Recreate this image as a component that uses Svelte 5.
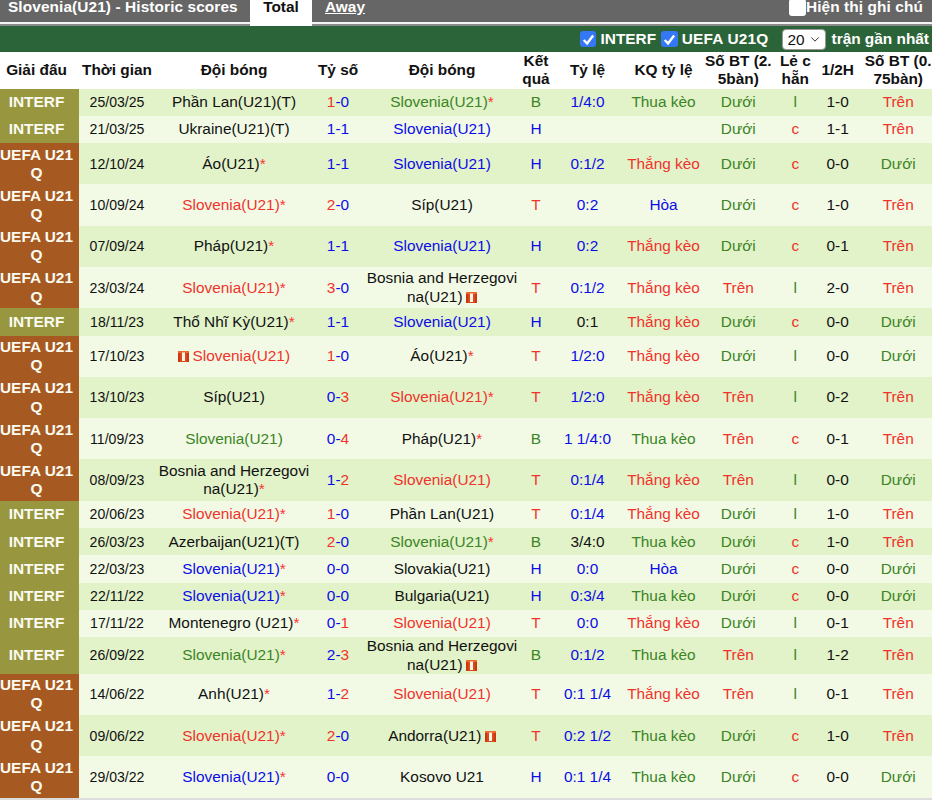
<script>
	const iw = 'Trên', du = 'Dưới';
	// league, date, home, score, away, result, odds, oddsResult, ou25, oddEven, half, ou075
	const matches = [
		{ lg: 'INTERF', date: '25/03/25', h: 'Phần Lan(U21)(T)', a: 'Slovenia(U21)', aStar: 1, ac: 'g', s: [1, 0], sc: ['r', 'b'], res: 'B', odds: '1/4:0', oc: 'b', kq: 'Thua kèo', ou: du, oe: 'l', half: '1-0', ou2: iw },
		{ lg: 'INTERF', date: '21/03/25', h: 'Ukraine(U21)(T)', a: 'Slovenia(U21)', ac: 'b', s: [1, 1], sc: ['b', 'b'], res: 'H', odds: '', oc: 'b', kq: '', ou: du, oe: 'c', half: '1-1', ou2: iw },
		{ lg: 'UEFA U21Q', date: '12/10/24', h: 'Áo(U21)', hStar: 1, a: 'Slovenia(U21)', ac: 'b', s: [1, 1], sc: ['b', 'b'], res: 'H', odds: '0:1/2', oc: 'b', kq: 'Thắng kèo', ou: du, oe: 'c', half: '0-0', ou2: du },
		{ lg: 'UEFA U21Q', date: '10/09/24', h: 'Slovenia(U21)', hc: 'r', hStar: 1, a: 'Síp(U21)', s: [2, 0], sc: ['r', 'b'], res: 'T', odds: '0:2', oc: 'b', kq: 'Hòa', ou: du, oe: 'c', half: '1-0', ou2: iw },
		{ lg: 'UEFA U21Q', date: '07/09/24', h: 'Pháp(U21)', hStar: 1, a: 'Slovenia(U21)', ac: 'b', s: [1, 1], sc: ['b', 'b'], res: 'H', odds: '0:2', oc: 'b', kq: 'Thắng kèo', ou: du, oe: 'c', half: '0-1', ou2: iw },
		{ lg: 'UEFA U21Q', date: '23/03/24', h: 'Slovenia(U21)', hc: 'r', hStar: 1, a: 'Bosnia and Herzegovina(U21)', aCard: 1, s: [3, 0], sc: ['r', 'b'], res: 'T', odds: '0:1/2', oc: 'b', kq: 'Thắng kèo', ou: iw, oe: 'l', half: '2-0', ou2: iw },
		{ lg: 'INTERF', date: '18/11/23', h: 'Thổ Nhĩ Kỳ(U21)', hStar: 1, a: 'Slovenia(U21)', ac: 'b', s: [1, 1], sc: ['b', 'b'], res: 'H', odds: '0:1', oc: '', kq: 'Thắng kèo', ou: du, oe: 'c', half: '0-0', ou2: du },
		{ lg: 'UEFA U21Q', date: '17/10/23', h: 'Slovenia(U21)', hc: 'r', hCard: 1, a: 'Áo(U21)', aStar: 1, s: [1, 0], sc: ['r', 'b'], res: 'T', odds: '1/2:0', oc: 'b', kq: 'Thắng kèo', ou: du, oe: 'l', half: '0-0', ou2: du },
		{ lg: 'UEFA U21Q', date: '13/10/23', h: 'Síp(U21)', a: 'Slovenia(U21)', ac: 'r', aStar: 1, s: [0, 3], sc: ['b', 'r'], res: 'T', odds: '1/2:0', oc: 'b', kq: 'Thắng kèo', ou: iw, oe: 'l', half: '0-2', ou2: iw },
		{ lg: 'UEFA U21Q', date: '11/09/23', h: 'Slovenia(U21)', hc: 'g', a: 'Pháp(U21)', aStar: 1, s: [0, 4], sc: ['b', 'r'], res: 'B', odds: '1 1/4:0', oc: 'b', kq: 'Thua kèo', ou: iw, oe: 'c', half: '0-1', ou2: iw },
		{ lg: 'UEFA U21Q', date: '08/09/23', h: 'Bosnia and Herzegovina(U21)', hStar: 1, a: 'Slovenia(U21)', ac: 'r', s: [1, 2], sc: ['b', 'r'], res: 'T', odds: '0:1/4', oc: 'b', kq: 'Thắng kèo', ou: iw, oe: 'l', half: '0-0', ou2: du },
		{ lg: 'INTERF', date: '20/06/23', h: 'Slovenia(U21)', hc: 'r', hStar: 1, a: 'Phần Lan(U21)', s: [1, 0], sc: ['r', 'b'], res: 'T', odds: '0:1/4', oc: 'b', kq: 'Thắng kèo', ou: du, oe: 'l', half: '1-0', ou2: iw },
		{ lg: 'INTERF', date: '26/03/23', h: 'Azerbaijan(U21)(T)', a: 'Slovenia(U21)', ac: 'g', aStar: 1, s: [2, 0], sc: ['r', 'b'], res: 'B', odds: '3/4:0', oc: '', kq: 'Thua kèo', ou: du, oe: 'c', half: '1-0', ou2: iw },
		{ lg: 'INTERF', date: '22/03/23', h: 'Slovenia(U21)', hc: 'b', hStar: 1, a: 'Slovakia(U21)', s: [0, 0], sc: ['b', 'b'], res: 'H', odds: '0:0', oc: 'b', kq: 'Hòa', ou: du, oe: 'c', half: '0-0', ou2: du },
		{ lg: 'INTERF', date: '22/11/22', h: 'Slovenia(U21)', hc: 'b', hStar: 1, a: 'Bulgaria(U21)', s: [0, 0], sc: ['b', 'b'], res: 'H', odds: '0:3/4', oc: 'b', kq: 'Thua kèo', ou: du, oe: 'c', half: '0-0', ou2: du },
		{ lg: 'INTERF', date: '17/11/22', h: 'Montenegro (U21)', hStar: 1, a: 'Slovenia(U21)', ac: 'r', s: [0, 1], sc: ['b', 'r'], res: 'T', odds: '0:0', oc: 'b', kq: 'Thắng kèo', ou: du, oe: 'l', half: '0-1', ou2: iw },
		{ lg: 'INTERF', date: '26/09/22', h: 'Slovenia(U21)', hc: 'g', hStar: 1, a: 'Bosnia and Herzegovina(U21)', aCard: 1, s: [2, 3], sc: ['b', 'r'], res: 'B', odds: '0:1/2', oc: 'b', kq: 'Thua kèo', ou: iw, oe: 'l', half: '1-2', ou2: iw },
		{ lg: 'UEFA U21Q', date: '14/06/22', h: 'Anh(U21)', hStar: 1, a: 'Slovenia(U21)', ac: 'r', s: [1, 2], sc: ['b', 'r'], res: 'T', odds: '0:1 1/4', oc: 'b', kq: 'Thắng kèo', ou: iw, oe: 'l', half: '0-1', ou2: iw },
		{ lg: 'UEFA U21Q', date: '09/06/22', h: 'Slovenia(U21)', hc: 'r', hStar: 1, a: 'Andorra(U21)', aCard: 1, s: [2, 0], sc: ['r', 'b'], res: 'T', odds: '0:2 1/2', oc: 'b', kq: 'Thua kèo', ou: du, oe: 'c', half: '1-0', ou2: iw },
		{ lg: 'UEFA U21Q', date: '29/03/22', h: 'Slovenia(U21)', hc: 'b', hStar: 1, a: 'Kosovo U21', s: [0, 0], sc: ['b', 'b'], res: 'H', odds: '0:1 1/4', oc: 'b', kq: 'Thua kèo', ou: du, oe: 'c', half: '0-0', ou2: du }
	];

	const resColor = { T: 'r', B: 'g', H: 'b' };
	const kqColor = { 'Thắng kèo': 'r', 'Thua kèo': 'g', 'Hòa': 'b' };
	const ouColor = (v) => (v === iw ? 'r' : 'g');
	const headers = ['Giải đấu', 'Thời gian', 'Đội bóng', 'Tỷ số', 'Đội bóng', 'Kết quả', 'Tỷ lệ', 'KQ tỷ lệ', 'Số BT (2.5bàn)', 'Lẻ c hẵn', '1/2H', 'Số BT (0.75bàn)'];
</script>

{#snippet card(side)}
	<svg class="card {side}" viewBox="0 0 11 11" aria-hidden="true">
		<rect width="11" height="11" fill="#dc4a1c" />
		<rect x="0" width="2" height="11" fill="#c9380f" />
		<rect x="9" width="2" height="11" fill="#c9380f" />
		<rect y="0" width="11" height="2" fill="#ea6a30" />
		<rect x="4" y="1.5" width="3" height="8.5" fill="#fff4ea" />
	</svg>
{/snippet}

{#snippet check()}
	<span class="check on">
		<svg viewBox="0 0 16 16" aria-hidden="true"><path d="M3.6 8.6 L6.8 12 L12.6 4.4" fill="none" stroke="#fff" stroke-width="2.3" /></svg>
	</span>
{/snippet}

<div class="page">
	<div class="tabs">
		<span class="title">Slovenia(U21) - Historic scores</span>
		<span class="tab active">Total</span>
		<a class="tab link" href="#away">Away</a>
		<label class="note"><span class="check"></span>Hiện thị ghi chú</label>
	</div>
	<div class="filters">
		{@render check()}<span class="flt">INTERF</span>
		{@render check()}<span class="flt second">UEFA U21Q</span>
		<div class="select">
			<select><option>20</option><option>10</option></select>
			<svg viewBox="0 0 12 8" aria-hidden="true"><path d="M1.5 1.5 L6 6 L10.5 1.5" fill="none" stroke="#333" stroke-width="1.2" /></svg>
		</div>
		<span class="flt last">trận gần nhất</span>
	</div>
	<div class="wrap">
		<table>
			<colgroup>
				<col style="width:85px" /><col style="width:76px" /><col style="width:158px" /><col style="width:50px" />
				<col style="width:158px" /><col style="width:30px" /><col style="width:73px" /><col style="width:79px" />
				<col style="width:70.6px" /><col style="width:43.4px" /><col style="width:41.4px" /><col style="width:79.6px" />
			</colgroup>
			<thead>
				<tr>
					{#each headers as h}<th>{h}</th>{/each}
				</tr>
			</thead>
			<tbody>
				{#each matches as m, i}
					<tr class:alt={i % 2 === 1}>
						<td class="lg" class:uefa={m.lg !== 'INTERF'}>{m.lg === 'INTERF' ? m.lg : 'UEFA U21 Q'}</td>
						<td class="date">{m.date}</td>
						<td class="team {m.hc ?? ''}">{#if m.hCard}{@render card('before')}{/if}{m.h}{#if m.hStar}<span class="star">*</span>{/if}</td>
						<td class="num"><span class={m.sc[0]}>{m.s[0]}</span><span class="b">-</span><span class={m.sc[1]}>{m.s[1]}</span></td>
						<td class="team {m.ac ?? ''}">{m.a}{#if m.aStar}<span class="star">*</span>{/if}{#if m.aCard}{@render card('after')}{/if}</td>
						<td class="num {resColor[m.res]}">{m.res}</td>
						<td class="num {m.oc}">{m.odds}</td>
						<td class="num {kqColor[m.kq] ?? ''}">{m.kq}</td>
						<td class="num {ouColor(m.ou)}">{m.ou}</td>
						<td class="num {m.oe === 'c' ? 'r' : 'g'}">{m.oe}</td>
						<td class="num">{m.half}</td>
						<td class="num {ouColor(m.ou2)}">{m.ou2}</td>
					</tr>
				{/each}
			</tbody>
		</table>
	</div>
</div>

<style>
	:global(body) {
		font-family: "Liberation Sans", Arial, sans-serif;
		background: #fff;
	}
	.page {
		width: 932px;
		height: 800px;
		overflow: hidden;
		color: #111;
	}
	.tabs {
		display: flex;
		align-items: flex-start;
		height: 22px;
		background: #666;
		border-bottom: 2px solid #f4f4f4;
		box-shadow: 0 2px 0 #8a8a8a;
		color: #fff;
		font-size: 15.4px;
		font-weight: bold;
		line-height: 14px;
	}
	.title {
		width: 250px;
		padding-left: 8px;
		box-sizing: border-box;
		white-space: nowrap;
		letter-spacing: 0.1px;
	}
	.tab {
		box-sizing: border-box;
		text-align: center;
	}
	.active {
		width: 62px;
		height: 26px;
		background: #fff;
		color: #111;
		position: relative;
	}
	.link {
		width: 66px;
		color: #fff;
		text-decoration: underline;
	}
	.note {
		display: flex;
		margin-left: auto;
		padding-right: 9px;
		letter-spacing: 0.1px;
	}
	.note .check {
		margin-top: -1px;
		background: #fff;
	}
	.check {
		display: block;
		flex: none;
		width: 16.7px;
		height: 16.7px;
		border-radius: 3px;
	}
	.check.on {
		background: #3478f6;
	}
	.check svg {
		display: block;
	}
	.filters {
		display: flex;
		align-items: center;
		justify-content: flex-end;
		height: 26px;
		margin-top: 2px;
		padding-right: 3px;
		background: #2b6438;
		color: #fff;
		font-size: 15.4px;
		font-weight: bold;
	}
	.flt {
		margin: 0 5px 0 4px;
	}
	.flt.second {
		margin-right: 13px;
		letter-spacing: 0.2px;
	}
	.flt.last {
		margin: 0 0 0 6px;
	}
	.select {
		position: relative;
		width: 44px;
		height: 21px;
	}
	select {
		display: block;
		appearance: none;
		width: 100%;
		height: 100%;
		padding: 0 0 0 5px;
		border: 1px solid #999;
		border-radius: 4px;
		background: #fff;
		color: #111;
		font: 15.4px "Liberation Sans", Arial, sans-serif;
	}
	.select svg {
		position: absolute;
		top: 7px;
		right: 6px;
		width: 10px;
		height: 7px;
		pointer-events: none;
	}
	.wrap {
		overflow: hidden;
		border-bottom: 2px solid #ddd;
	}
	table {
		table-layout: fixed;
		width: 944px;
		margin-left: -6px;
		border-collapse: collapse;
		word-break: break-all;
		text-align: center;
		font-size: 15.4px;
		line-height: 18.3px;
	}
	th {
		padding: 0;
		font-weight: bold;
		background: #fff;
		color: #111;
	}
	th:last-child {
		padding: 0 4px;
	}
	td {
		height: 27.3px;
		padding: 0;
		box-sizing: border-box;
		background: #e2f2c9;
	}
	.alt td {
		background: #f2fae6;
	}
	td.lg {
		padding: 2.35px 0;
		background: #98973f;
		color: #fbfbf2;
		font-weight: bold;
	}
	td.lg.uefa {
		background: #a65a21;
	}
	.date {
		font-size: 14.1px;
	}
	.star {
		color: #f33;
	}
	.card {
		display: inline-block;
		width: 11px;
		height: 11px;
		vertical-align: -1px;
	}
	.card.before {
		margin-right: 3.5px;
	}
	.card.after {
		margin-left: 3.5px;
	}
	.r {
		color: #f0332b;
	}
	.b {
		color: #0c0ce8;
	}
	.g {
		color: #3b8524;
	}
</style>
